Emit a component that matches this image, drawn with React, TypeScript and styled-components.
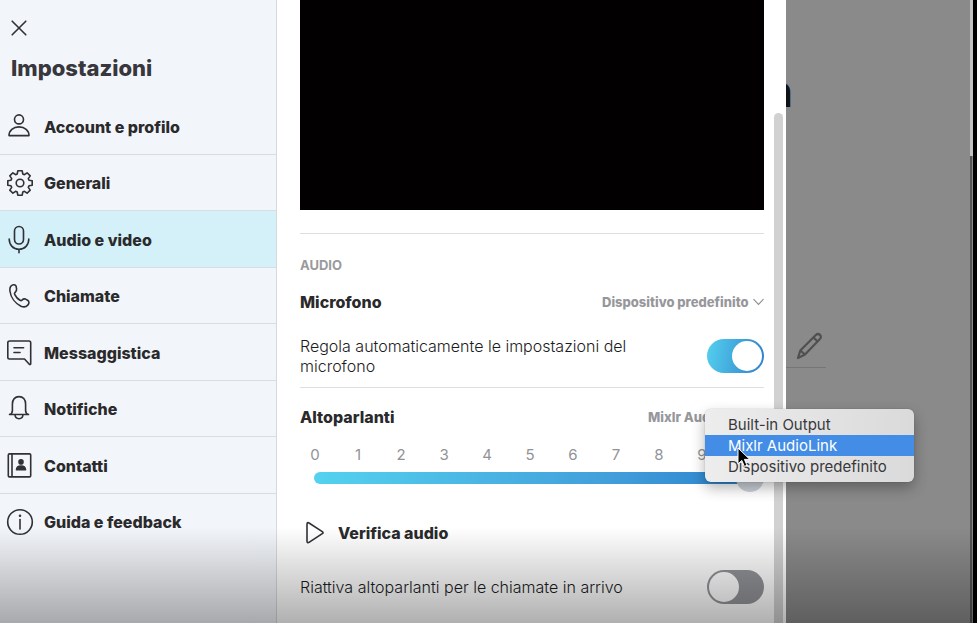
import React, { useState } from 'react';
import styled, { createGlobalStyle, css } from 'styled-components';

const GlobalStyle = createGlobalStyle`
  *, *::before, *::after { box-sizing: border-box; }
  body {
    margin: 0;
    background: #000;
    color: #2a2a2c;
    font-family: Inter, "Liberation Sans", sans-serif;
    font-size: 16px;
  }
  button, select, input { font: inherit; color: inherit; margin: 0; }
  h1, h2, h3, p, ul { margin: 0; padding: 0; }
`;

const Window = styled.div`
  position: relative;
  display: flex;
  min-height: 100vh;
  overflow: hidden;
`;

const Sidebar = styled.aside`
  flex: 0 0 277px;
  padding-top: 16px;
  background: #f2f5f9;
  border-right: 1px solid #d6dade;
`;

const CloseButton = styled.button`
  display: flex;
  margin-left: 7px;
  padding: 0;
  border: 0;
  background: none;
`;

const Title = styled.h1`
  margin: 14px 0 15px 11px;
  font-size: 22px;
  line-height: 28px;
  font-weight: 800;
  color: #37373d;
`;

const Nav = styled.nav`
  display: grid;
  grid-auto-rows: 1fr;
  height: 452px;
`;

const NavItem = styled.a<{ $active?: boolean }>`
  display: flex;
  align-items: center;
  gap: 12px;
  padding: 2px 0 0 6px;
  border-top: 1px solid #d9dde1;
  font-weight: 800;
  line-height: 24px;
  color: #2a2a2c;
  text-decoration: none;
  background: ${(p) => (p.$active ? '#d4f0f9' : 'transparent')};
  &:first-child { border-top-color: transparent; }
`;

const Icon = styled.svg`
  flex: none;
  fill: none;
  stroke: #303036;
  stroke-width: 1.6;
  stroke-linecap: round;
  stroke-linejoin: round;
`;

const Panel = styled.main`
  flex: 1 1 0;
  min-width: 0;
  padding-left: 23px;
  background: #fff;
`;

const Preview = styled.div`
  height: 210px;
  margin-bottom: 23px;
  background: #020001;
`;

const Divider = styled.hr`
  height: 1px;
  margin: 0;
  border: 0;
  background: #dcdfe2;
`;

const SectionLabel = styled.h2`
  margin: 21px 0 15px;
  font-size: 13px;
  line-height: 20px;
  font-weight: 700;
  color: #9a9a9e;
`;

const Row = styled.div<{ $top?: number; $bottom?: number }>`
  display: flex;
  align-items: center;
  justify-content: space-between;
  margin-top: ${(p) => p.$top ?? 0}px;
  margin-bottom: ${(p) => p.$bottom ?? 0}px;
`;

const RowTitle = styled.label`
  font-weight: 800;
  line-height: 24px;
`;

const RowText = styled.label`
  max-width: 340px;
  font-size: 16px;
  font-weight: 300;
  line-height: 20px;
  color: #1c1c1e;
`;

const Picker = styled.div`
  position: relative;
  display: flex;
  align-items: center;
  gap: 4px;
  color: #97979b;
`;

const pickerText = css`
  padding: 0;
  border: 0;
  background: none;
  appearance: none;
  font-size: 13px;
  line-height: 20px;
  font-weight: 800;
  color: inherit;
`;

const PickerSelect = styled.select`${pickerText}`;
const PickerButton = styled.button`${pickerText}`;

const Chevron = styled.svg`
  flex: none;
  fill: none;
  stroke: #8e8e92;
  stroke-width: 1.1;
`;

const Switch = styled.input`
  flex: none;
  width: 57px;
  height: 34px;
  padding: 2px;
  appearance: none;
  border-radius: 17px;
  background: #929398;
  &::before {
    content: '';
    display: block;
    width: 30px;
    height: 30px;
    border-radius: 50%;
    background: #fff;
  }
  &:checked { background: linear-gradient(100deg, #54d0ee, #2f7fcb); }
  &:checked::before { margin-left: 23px; }
`;

const Scale = styled.div`
  display: flex;
  justify-content: space-between;
  margin: 17px 15px 0 11px;
  font-size: 15px;
  line-height: 18px;
  color: #929296;
`;

const Tick = styled.span`
  display: flex;
  justify-content: center;
  width: 8px;
`;

const Volume = styled.input`
  display: block;
  width: calc(100% - 14px);
  height: 28px;
  margin-left: 14px;
  appearance: none;
  background: none;
  &::-webkit-slider-runnable-track {
    height: 12px;
    border-radius: 6px;
    background: linear-gradient(90deg, #54d2ef, #429fdb 65%, #2a80cc);
  }
  &::-webkit-slider-thumb {
    width: 28px;
    height: 28px;
    margin-top: -8px;
    appearance: none;
    border-radius: 50%;
    background: #cbd2d9;
  }
`;

const TestButton = styled.button`
  display: flex;
  align-items: center;
  gap: 12px;
  margin: 29px 0 25px;
  padding: 0 0 0 4px;
  border: 0;
  background: none;
  font-weight: 800;
  line-height: 24px;
`;

const Menu = styled.ul`
  position: absolute;
  top: 2px;
  right: -150px;
  z-index: 2;
  width: 209px;
  padding: 5px 0;
  list-style: none;
  border-radius: 6px;
  background: linear-gradient(90deg, #ededed, #dadada);
  box-shadow: 0 0 1px rgba(0, 0, 0, 0.4), 0 6px 14px rgba(0, 0, 0, 0.3);
`;

const MenuItem = styled.li<{ $selected?: boolean }>`
  padding-left: 23px;
  font-size: 15px;
  line-height: 21px;
  color: ${(p) => (p.$selected ? '#fff' : '#38383a')};
  background: ${(p) => (p.$selected ? '#438de6' : 'transparent')};
`;

const Pointer = styled.svg`
  position: absolute;
  top: 38px;
  left: 32px;
`;

const Rail = styled.div`
  display: flex;
  flex: 0 0 22px;
  flex-direction: column;
  padding: 113px 3px 0 10px;
  background: #fff;
`;

const Thumb = styled.div`
  flex: 1;
  border-radius: 5px 5px 0 0;
  background: #d1d1d1;
`;

const Backdrop = styled.div`
  flex: 0 0 184px;
  padding-top: 65px;
  background: #8a8a8a;
`;

const HiddenHeading = styled.div`
  display: flex;
  justify-content: flex-end;
  width: 7px;
  height: 52px;
  overflow: hidden;
  font-size: 44px;
  line-height: 52px;
  font-weight: 700;
  color: #111;
`;

const EditField = styled.div`
  width: 40px;
  margin-top: 215px;
  padding: 0 0 7px 10px;
  border-bottom: 1px solid #757575;
`;

const EditButton = styled.button`
  display: flex;
  padding: 0;
  border: 0;
  background: none;
`;

const Edge = styled.div`
  display: flex;
  flex: 0 0 7px;
  flex-direction: column;
  padding-right: 4px;
  background: #000;
`;

const EdgeTop = styled.div`
  height: 156px;
  background: #c3c3c3;
`;

const EdgeBottom = styled.div`
  flex: 1;
  border-right: 1px solid #8a8a8a;
  background: #555;
`;

const Shade = styled.div`
  position: absolute;
  right: 0;
  bottom: 0;
  left: 0;
  z-index: 1;
  height: 96px;
  pointer-events: none;
  background: linear-gradient(rgba(0, 0, 0, 0), rgba(0, 0, 0, 0.31));
`;

const icons: Record<string, React.ReactNode> = {
  account: (
    <>
      <circle cx="13" cy="5.400" r="4.500" />
      <path d="M3 21.600c0-5.200 4.200-8.700 10-8.700s10 3.500 10 8.700z" />
    </>
  ),
  general: (
    <path
      transform="translate(14 13)"
      d="M-2.200-12.200h4.400l.6 3.200 1.600.7 2.700-1.900 3.100 3.100-1.900 2.700.7 1.600 3.200.6v4.400l-3.200.6-.7 1.600 1.900 2.700-3.100 3.100-2.700-1.900-1.600.7-.6 3.200h-4.400l-.6-3.200-1.600-.7-2.700 1.900-3.100-3.100 1.900-2.700-.7-1.600-3.200-.6v-4.400l3.200-.6.7-1.600-1.900-2.700 3.100-3.100 2.700 1.900 1.600-.7zM-3.800 0a3.800 3.800 0 1 0 7.600 0a3.800 3.800 0 1 0-7.600 0"
    />
  ),
  audio: (
    <>
      <rect x="8.500" y="-.5" width="9" height="17.500" rx="4.500" />
      <path d="M3.200 12c0 6 4 10.300 9.800 10.300s9.800-4.300 9.800-10.300M13 22.300v3.400" />
    </>
  ),
  calls: (
    <path d="M4.600 3.500C6 1.600 8.600 1 10 2.900l.6 3c.3 1.700-.8 2.700-1.800 3.800-.5.600-.4 1.200 0 1.900 1.200 2.400 2.900 4.400 5.200 5.700.8.500 1.400.4 2-.2 1-1 2-1.500 3.500-1l2.100 1.200c2 1.200 1.500 3.400.2 4.800-1.500 1.700-4.200 2.200-6.800 1.100C9.500 20.500 4.800 14.600 3.900 8c-.2-1.600-.2-3.200.7-4.500z" />
  ),
  messages: (
    <path d="M4 1h19c1.100 0 1.700.6 1.700 1.700v21.100c0 .9-.8 1.100-1.400.5L18.500 19H3.500c-1.100 0-1.700-.6-1.700-1.700V2.700C1.800 1.600 2.400 1 4 1zM8 7.800h9.600M8 12.500h6" />
  ),
  notifications: (
    <path d="M3.500 18.500c2.200-.6 2.900-1.800 2.900-4V8c0-4.500 2.600-7.400 6.600-7.400s6.600 2.900 6.600 7.400v6.500c0 2.200.7 3.400 2.900 4zM9 18.800c.2 2.500 1.600 3.900 4 3.900s3.800-1.400 4-3.900" />
  ),
  contacts: (
    <>
      <path d="M3.500.9h20q1.200 0 1.200 1.200v20.600q0 1.200-1.200 1.200h-20q-1.200 0-1.200-1.200V2.100q0-1.200 1.200-1.200zM6 .9v23" />
      <circle cx="15" cy="8.900" r="2" fill="#303036" />
      <path d="M10.500 16.800c.2-2.500 2-3.700 4.500-3.700s4.300 1.200 4.500 3.700z" fill="#303036" />
    </>
  ),
  help: (
    <>
      <circle cx="14" cy="13" r="12.300" />
      <path d="M14 10.500v9.500" />
      <circle cx="14" cy="6.800" r=".5" fill="#303036" />
    </>
  ),
};

const navItems = [
  { id: 'account', label: 'Account e profilo' },
  { id: 'general', label: 'Generali' },
  { id: 'audio', label: 'Audio e video' },
  { id: 'calls', label: 'Chiamate' },
  { id: 'messages', label: 'Messaggistica' },
  { id: 'notifications', label: 'Notifiche' },
  { id: 'contacts', label: 'Contatti' },
  { id: 'help', label: 'Guida e feedback' },
];

const outputs = ['Built-in Output', 'Mixlr AudioLink', 'Dispositivo predefinito'];

const ChevronDown = () => (
  <Chevron width="11" height="8" viewBox="0 0 11 8" aria-hidden="true">
    <path d="M.5 1.200 5.500 6.500 10.500 1.200" />
  </Chevron>
);

export default function App() {
  const [output, setOutput] = useState('Mixlr AudioLink');

  return (
    <>
      <GlobalStyle />
      <Window>
        <Sidebar>
          <CloseButton aria-label="Chiudi">
            <Icon width="24" height="24" viewBox="0 0 24 24">
              <path d="m5.200 5.200 13.600 13.600m0-13.600L5.200 18.800" />
            </Icon>
          </CloseButton>
          <Title>Impostazioni</Title>
          <Nav>
            {navItems.map((item) => (
              <NavItem
                key={item.id}
                href={`#${item.id}`}
                $active={item.id === 'audio'}
                aria-current={item.id === 'audio' ? 'page' : undefined}
              >
                <Icon width="26" height="26" viewBox="0 0 26 26" overflow="visible" aria-hidden="true">
                  {icons[item.id]}
                </Icon>
                {item.label}
              </NavItem>
            ))}
          </Nav>
        </Sidebar>

        <Panel>
          <Preview />
          <Divider />
          <SectionLabel>AUDIO</SectionLabel>
          <Row $bottom={22}>
            <RowTitle htmlFor="microphone">Microfono</RowTitle>
            <Picker>
              <PickerSelect id="microphone">
                <option>Dispositivo predefinito</option>
              </PickerSelect>
              <ChevronDown />
            </Picker>
          </Row>
          <Row $bottom={11}>
            <RowText htmlFor="auto-mic">Regola automaticamente le impostazioni del microfono</RowText>
            <Switch id="auto-mic" type="checkbox" role="switch" defaultChecked />
          </Row>
          <Divider />
          <Row $top={17}>
            <RowTitle htmlFor="speakers">Altoparlanti</RowTitle>
            <Picker>
              <PickerButton id="speakers" aria-haspopup="listbox" aria-expanded="true">
                {output}
              </PickerButton>
              <ChevronDown />
              <Menu role="listbox" aria-label="Altoparlanti">
                {outputs.map((name) => (
                  <MenuItem
                    key={name}
                    role="option"
                    aria-selected={name === output}
                    $selected={name === output}
                    onClick={() => setOutput(name)}
                  >
                    {name}
                  </MenuItem>
                ))}
                <Pointer width="15" height="22" viewBox="0 0 15 22" aria-hidden="true">
                  <path d="M1 1v16l3.800-3.600 2.600 6 2.600-1.100-2.600-5.900h5.400z" fill="#000" stroke="#fff" />
                </Pointer>
              </Menu>
            </Picker>
          </Row>
          <Scale aria-hidden="true">
            {Array.from({ length: 11 }, (_, n) => (
              <Tick key={n}>{n}</Tick>
            ))}
          </Scale>
          <Volume type="range" min="0" max="10" defaultValue="10" aria-label="Volume altoparlanti" />
          <TestButton>
            <Icon width="22" height="24" viewBox="0 0 22 24" aria-hidden="true">
              <path d="M3 3.200c0-1.500.9-1.900 2-1.200l13.300 8.600c1 .7 1 1.400 0 2L5 21.300c-1.100.7-2 .3-2-1.100z" />
            </Icon>
            Verifica audio
          </TestButton>
          <Row>
            <RowText htmlFor="unmute">Riattiva altoparlanti per le chiamate in arrivo</RowText>
            <Switch id="unmute" type="checkbox" role="switch" />
          </Row>
        </Panel>
        <Rail>
          <Thumb />
        </Rail>

        <Backdrop>
          <HiddenHeading aria-hidden="true">n</HiddenHeading>
          <EditField>
            <EditButton aria-label="Modifica">
              <svg width="28" height="28" viewBox="0 0 28 28" fill="none" stroke="#505050" strokeWidth="2.200" strokeLinejoin="round">
                <path d="m2 26 2.300-7.500L19.800 3c1.300-1.200 3-1.200 4.200-.1s1.100 2.900-.1 4.100L9 22.500zM4.300 18.500 9 22.500M17.500 5.500l4.300 4.300" />
              </svg>
            </EditButton>
          </EditField>
        </Backdrop>
        <Edge>
          <EdgeTop />
          <EdgeBottom />
        </Edge>
        <Shade />
      </Window>
    </>
  );
}
